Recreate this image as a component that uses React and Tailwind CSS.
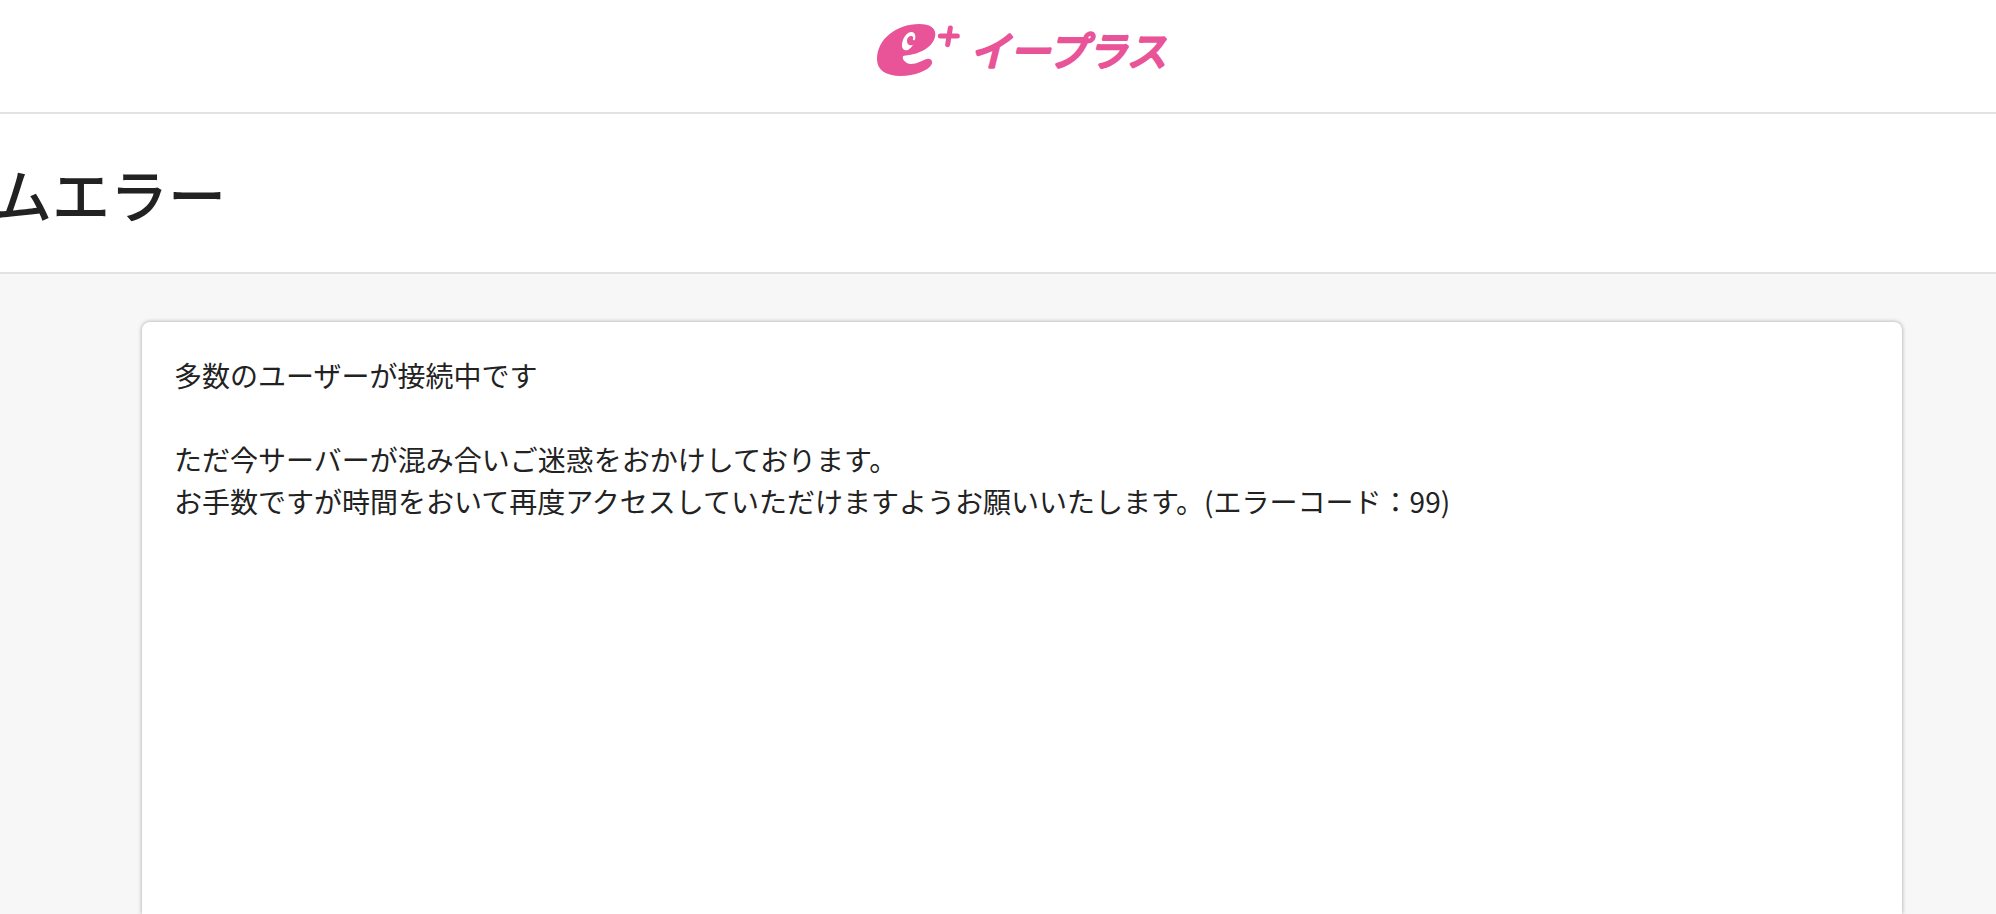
function Logo() {
  return (
    <svg viewBox="48 66 876 168" className="h-14 w-[292px] overflow-visible" role="img" aria-label="e+ イープラス">
      <g fill="#e95498">
        <path d="M178 72C210 72 226 83 226 103C225 134 190 163 132 167C126 168 128 177 134 184C142 194 160 194 180 185C190 181 198 176 206 176C214 177 219 184 215 193C204 213 164 228 122 228C78 228 51 211 51 178C51 118 108 72 178 72Z" />
        <path
          fill="#fff"
          d="M155 96C165 96 168 108 165 120C160 138 148 152 137 151C126 149 123 136 129 120C134 106 144 96 155 96Z"
        />
        <path d="M153 108C157 108 159 110 160 114C158 116 158 120 161 121C163 121 164 119 167 117C168 131 160 136 152 136C145 136 141 130 141 123C141 115 146 108 153 108Z" />
      </g>
      <path d="M271 84L263 134M241 108L292 108" fill="none" stroke="#e95498" strokeWidth="15" strokeLinecap="round" />
      <text
        x="330"
        y="198"
        fill="#e95498"
        stroke="#e95498"
        strokeWidth="9"
        strokeLinejoin="round"
        className="font-['Noto_Sans_CJK_JP',sans-serif] text-[120px] italic"
      >
        イープラス
      </text>
    </svg>
  );
}

export default function App() {
  return (
    <div className="flex h-screen flex-col overflow-hidden bg-[#f7f7f7] font-['Noto_Sans_CJK_JP',sans-serif] text-[#222]">
      <header className="flex h-[114px] shrink-0 justify-center border-b-2 border-[#e2e2e2] bg-white pt-[22px] pl-12">
        <a href="#" className="h-14">
          <Logo />
        </a>
      </header>

      <div className="flex h-40 shrink-0 items-center border-b-2 border-[#e2e2e2] bg-white">
        <h1 className="flex w-[226px] justify-end text-[58px] leading-none font-medium whitespace-nowrap">ムエラー</h1>
      </div>

      <main className="flex grow flex-col pt-12 pr-[94px] pl-[142px]">
        <section className="grow rounded-t-lg bg-white px-8 pt-8 text-[28px] leading-[42px] shadow-[0_0_4px_rgba(0,0,0,0.35)]">
          <p>多数のユーザーが接続中です</p>
          <p className="mt-[42px]">
            ただ今サーバーが混み合いご迷惑をおかけしております。
            <br />
            お手数ですが時間をおいて再度アクセスしていただけますようお願いいたします。(エラーコード：99)
          </p>
        </section>
      </main>
    </div>
  );
}
